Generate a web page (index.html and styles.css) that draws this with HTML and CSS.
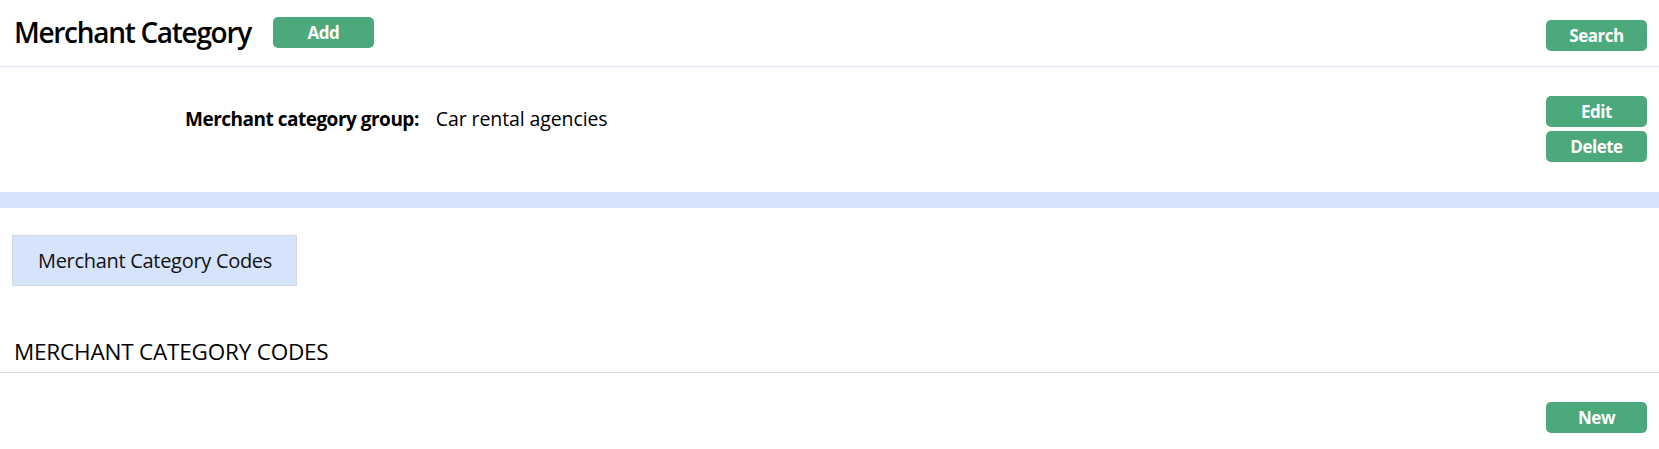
FILE: index.html
```html
<!DOCTYPE html>
<html>
<head>
<meta charset="utf-8">
<link rel="stylesheet" href="styles.css">
</head>
<body>
<header class="topbar">
  <div class="title-group">
    <h1 class="page-title">Merchant Category</h1>
    <button class="btn">Add</button>
  </div>
  <button class="btn">Search</button>
</header>
<section class="details">
  <div class="field">
    <span class="field-label">Merchant category group:</span>
    <span class="field-value">Car rental agencies</span>
  </div>
  <div class="actions">
    <button class="btn">Edit</button>
    <button class="btn">Delete</button>
  </div>
</section>
<div class="band"></div>
<div class="tabs">
  <div class="tab">Merchant Category Codes</div>
</div>
<section class="codes">
  <h2 class="section-title">MERCHANT CATEGORY CODES</h2>
  <div class="codes-actions">
    <button class="btn">New</button>
  </div>
</section>
</body>
</html>
```
FILE: styles.css
```css
* { box-sizing: border-box; }
body {
  margin: 0;
  font-family: "Open Sans", "Noto Sans", sans-serif;
  color: #000;
  background: #fff;
}
.btn {
  width: 101px;
  height: 31px;
  border: none;
  border-radius: 5px;
  background: #4ca97b;
  color: #fff;
  font-family: "Open Sans", sans-serif;
  font-weight: 700;
  font-size: 17px;
  letter-spacing: -0.5px;
  padding: 0;
  cursor: pointer;
}
.topbar {
  display: flex;
  justify-content: space-between;
  align-items: flex-start;
  height: 67px;
  padding: 17px 12px 0 14px;
  border-bottom: 1px solid #dbe6fb;
}
.topbar > .btn { margin-top: 3px; }
.title-group {
  display: flex;
  align-items: center;
  gap: 22px;
}
.page-title {
  margin: 0;
  font-size: 28px;
  font-weight: 600;
  letter-spacing: -1.3px;
  line-height: 31px;
}
.details {
  display: flex;
  justify-content: space-between;
  align-items: flex-start;
  padding: 29px 12px 30px 185px;
}
.field {
  display: flex;
  gap: 17px;
  margin-top: 10px;
  font-size: 19px;
  line-height: 26px;
}
.field-label { font-weight: 700; letter-spacing: -0.5px; }
.field-value { letter-spacing: -0.1px; font-size: 19.5px; }
.actions {
  display: flex;
  flex-direction: column;
  gap: 4px;
}
.band {
  height: 16px;
  background: #d6e4fb;
}
.tabs {
  padding: 27px 12px 0 12px;
}
.tab {
  display: inline-flex;
  align-items: center;
  width: 285px;
  height: 51px;
  padding-left: 25px;
  background: #d6e4fb;
  border: 1px solid #d2d8e2;
  font-size: 20px;
  letter-spacing: -0.3px;
  color: #111;
}
.codes {
  padding-top: 51px;
}
.section-title {
  margin: 0;
  padding: 0 12px 6px 14px;
  font-size: 22.5px;
  font-weight: 400;
  line-height: 29px;
  letter-spacing: -0.2px;
  border-bottom: 1px solid #dcdcdc;
}
.codes-actions {
  display: flex;
  justify-content: flex-end;
  padding: 29px 12px 0 0;
}
```
